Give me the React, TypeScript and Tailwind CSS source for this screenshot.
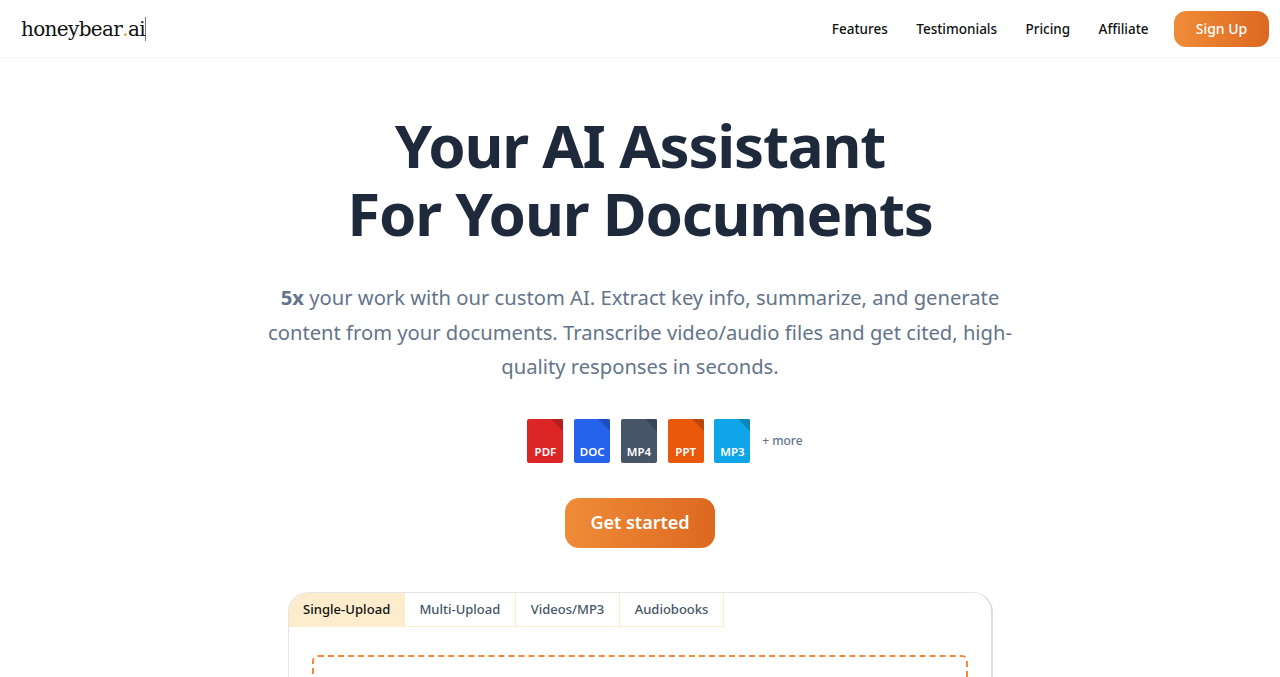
const navLinks = ["Features", "Testimonials", "Pricing", "Affiliate"];

const fileTypes = [
  { label: "PDF", body: "bg-[#dc2626]", fold: "#b11f1f" },
  { label: "DOC", body: "bg-[#2563eb]", fold: "#1e4fbc" },
  { label: "MP4", body: "bg-[#475569]", fold: "#394454" },
  { label: "PPT", body: "bg-[#ea580c]", fold: "#bb460a" },
  { label: "MP3", body: "bg-[#0ea5e9]", fold: "#0b84ba" },
];

const tabs = ["Multi-Upload", "Videos/MP3", "Audiobooks"];

const FileBadge = ({ label, body, fold }: { label: string; body: string; fold: string }) => {
  return (
    <div className={`relative flex h-[44px] w-[36px] items-end justify-center rounded-[2px] pb-[3px] ${body}`}>
      <svg className="absolute right-0 top-0" width="12" height="12" viewBox="0 0 12 12">
        <path d="M0 0H10.5Q12 0 12 1.5V12Z" fill={fold} />
      </svg>
      <span className="text-[11.5px] font-semibold leading-[16px] text-white">{label}</span>
    </div>
  );
};

export default function App() {
  return (
    <div className="h-[677px] w-full overflow-hidden bg-white font-['Noto_Sans',sans-serif]">
      <header className="flex h-[58px] items-center justify-between border-b border-[#f3f3f9] pl-[21px] pr-[11px]">
        <div className="flex h-[24px] items-center border-r border-[#777] font-['DejaVu_Serif',serif] text-[20px] leading-[24px] tracking-[-0.65px] text-[#111]">
          honeybear<span className="text-[#d99a1c]">.</span>ai
        </div>
        <nav className="flex items-center gap-[28.4px]">
          {navLinks.map((link) => (
            <a key={link} className="pt-[2px] text-[13.5px] font-medium text-[#111]">
              {link}
            </a>
          ))}
          <button className="ml-[-3px] h-[36px] w-[95px] rounded-[12px] bg-gradient-to-r from-[#ef8c38] to-[#dd6820] text-[14px] font-medium text-white">
            Sign Up
          </button>
        </nav>
      </header>

      <main className="flex flex-col items-center">
        <h1 className="mt-[53px] text-center text-[60px] font-bold leading-[68px] tracking-[-1.2px] text-[#1e293b]">
          Your AI Assistant
          <br />
          For Your Documents
        </h1>

        <p className="mt-[33px] w-[760px] text-center text-[20.2px] leading-[34.5px] text-[#64748b]">
          <b className="font-bold">5x</b> your work with our custom AI. Extract key info, summarize, and generate
          content from your documents. Transcribe video/audio files and get cited, high-quality responses in seconds.
        </p>

        <div className="mt-[35px] ml-[50px] flex items-center gap-[10.75px]">
          {fileTypes.map((file) => (
            <FileBadge key={file.label} {...file} />
          ))}
          <span className="ml-[1px] text-[12px] font-medium text-[#64748b]">+ more</span>
        </div>

        <button className="mt-[35px] h-[50px] w-[150px] rounded-[14px] bg-gradient-to-r from-[#ef8c38] to-[#dd6820] text-[18px] font-semibold text-white">
          Get started
        </button>

        <section className="mt-[44px] h-[200px] w-[705px] rounded-t-[20px] border-2 border-b-0 border-l-[1px] border-t-[1px] border-[#e5e5e5] border-r-[#dedede]">
          <div className="flex">
            <div className="flex h-[34px] items-center rounded-tl-[19px] bg-[#fdedcd] px-[14.5px] text-[13.1px] font-medium text-[#111]">
              Single-Upload
            </div>
            {tabs.map((tab) => (
              <div
                key={tab}
                className="flex h-[34px] items-center border-b border-r border-[#fdedcd] px-[14.7px] pt-[1px] text-[13px] font-medium text-[#475569]"
              >
                {tab}
              </div>
            ))}
          </div>
          <div className="mx-[23px] mt-[28px] h-[120px] rounded-[6px] border-2 border-dashed border-[#f08a3c]" />
        </section>
      </main>
    </div>
  );
}
